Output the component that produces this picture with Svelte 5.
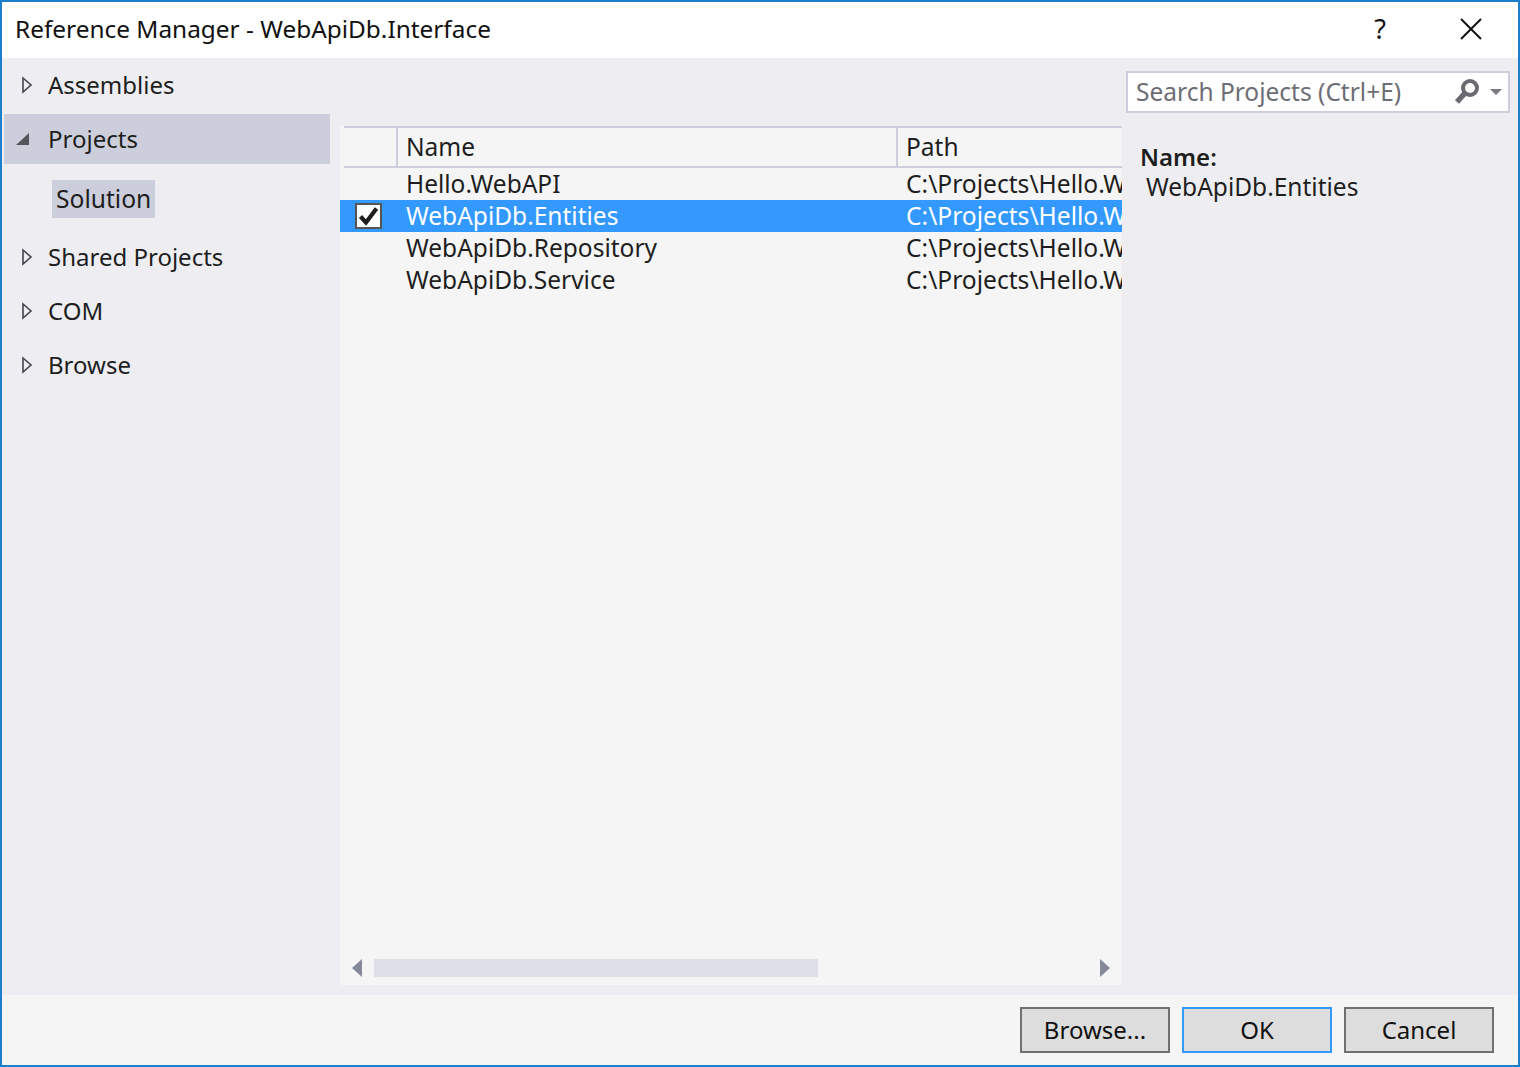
<script>
  const nav = [
    { label: 'Assemblies', icon: 'closed' },
    { label: 'Projects', icon: 'open', selected: true },
    { label: 'Solution', sub: true },
    { label: 'Shared Projects', icon: 'closed' },
    { label: 'COM', icon: 'closed' },
    { label: 'Browse', icon: 'closed' }
  ];
  const rows = [
    { name: 'Hello.WebAPI' },
    { name: 'WebApiDb.Entities', selected: true },
    { name: 'WebApiDb.Repository' },
    { name: 'WebApiDb.Service' }
  ];
</script>

<div class="window">
  <header class="title">
    <span class="title-text">Reference Manager - WebApiDb.Interface</span>
    <span class="help">?</span>
    <svg class="close" width="22" height="22" viewBox="0 0 22 22"><path d="M1 1 L21 21 M21 1 L1 21" stroke="#111" stroke-width="2" fill="none"/></svg>
  </header>

  <div class="main">
    <nav class="nav">
      {#each nav as item}
        {#if item.sub}
          <div class="sub"><span>{item.label}</span></div>
        {:else}
          <div class="nav-row" class:selected={item.selected}>
            {#if item.icon === 'closed'}
              <svg class="arrow closed" width="12" height="18" viewBox="0 0 12 18"><path d="M2 2 L10 9 L2 16 Z" fill="none" stroke="#444450" stroke-width="1.6"/></svg>
            {:else}
              <svg class="arrow" width="16" height="18" viewBox="0 0 16 18"><path d="M1 15 L14 15 L14 3 Z" fill="#55555c"/></svg>
            {/if}
            <span>{item.label}</span>
          </div>
        {/if}
      {/each}
    </nav>

    <section class="list">
      <div class="thead">
        <div class="c-check"></div>
        <div class="c-name">Name</div>
        <div class="c-path">Path</div>
      </div>
      <div class="tbody">
        {#each rows as row}
          <div class="tr" class:selected={row.selected}>
            <div class="c-check">
              {#if row.selected}
                <span class="checkbox">
                  <svg width="23" height="21" viewBox="0 0 23 21"><path d="M3.5 10.5 L9 16.5 L19.5 2.5" fill="none" stroke="#1e1e1e" stroke-width="4.2"/></svg>
                </span>
              {/if}
            </div>
            <div class="c-name">{row.name}</div>
            <div class="c-path">C:\Projects\Hello.WebAPI\WebApiDb</div>
          </div>
        {/each}
      </div>
      <div class="scrollbar">
        <svg width="10" height="18" viewBox="0 0 10 18"><path d="M10 0 V18 L0 9 Z" fill="#868999"/></svg>
        <div class="track"><div class="thumb"></div></div>
        <svg width="10" height="18" viewBox="0 0 10 18"><path d="M0 0 V18 L10 9 Z" fill="#868999"/></svg>
      </div>
    </section>

    <aside class="side">
      <div class="search">
        <span class="placeholder">Search Projects (Ctrl+E)</span>
        <svg class="glass" width="26" height="28" viewBox="0 0 26 28"><circle cx="16" cy="10" r="7" fill="none" stroke="#6a6a70" stroke-width="4"/><path d="M11 15 L3 24" stroke="#6a6a70" stroke-width="5.5" fill="none"/></svg>
        <svg class="caret" width="12" height="6" viewBox="0 0 12 6"><path d="M0 0 H12 L6 6 Z" fill="#7a7a82"/></svg>
      </div>
      <div class="details">
        <div class="d-label">Name:</div>
        <div class="d-value">WebApiDb.Entities</div>
      </div>
    </aside>
  </div>

  <footer class="footer">
    <button>Browse...</button>
    <button class="default">OK</button>
    <button>Cancel</button>
  </footer>
</div>

<style>
  :global(body) { margin: 0; background: #fff; }
  .window {
    box-sizing: border-box;
    width: 1520px;
    height: 1067px;
    border: 2px solid #1c7fcb;
    display: flex;
    flex-direction: column;
    font-family: "Noto Sans", "Open Sans", sans-serif;
    font-size: 24.5px;
    color: #1e1e1e;
    overflow: hidden;
  }
  .title {
    height: 56px;
    flex: none;
    box-sizing: border-box;
    padding: 0 0 4px 13px;
    background: #fff;
    display: flex;
    align-items: center;
    color: #111;
    font-size: 24.4px;
  }
  .title-text { flex: 1; }
  .help { width: 24px; text-align: center; margin-right: 68px; margin-left: -1px; font-size: 27px; }
  .close { margin-right: 36px; margin-top: 2px; }

  .main {
    flex: 1;
    min-height: 0;
    background: #eeeef2;
    display: flex;
  }
  .nav {
    width: 328px;
    flex: none;
    padding: 2px 0 0 2px;
    box-sizing: border-box;
    display: flex;
    flex-direction: column;
    font-size: 24px;
  }
  .nav-row {
    height: 50px;
    box-sizing: border-box;
    padding: 0 0 2px 44px;
    margin-bottom: 4px;
    display: flex;
    align-items: center;
    position: relative;
  }
  .nav-row.selected { background: #cccedb; }
  .arrow { position: absolute; left: 11px; top: 16px; }
  .arrow.closed { left: 17px; }
  .sub {
    display: flex;
    padding-left: 48px;
    margin: 12px 0 14px;
    height: 38px;
    font-size: 24.6px;
  }
  .sub span {
    background: #cccedb;
    padding: 0 4px;
    line-height: 38px;
    height: 38px;
  }
  .list {
    width: 782px;
    margin: 68px 0 10px 10px;
    flex: none;
    background: #f5f5f5;
    display: flex;
    flex-direction: column;
    overflow: hidden;
  }
  .thead {
    display: flex;
    margin-left: 4px;
    height: 38px;
    flex: none;
    border-top: 2px solid #cccedb;
    border-bottom: 2px solid #cccedb;
    align-items: stretch;
  }
  .thead .c-check { width: 52px; border-right: 2px solid #cccedb; flex: none; }
  .thead .c-name { width: 500px; padding-left: 8px; box-sizing: border-box; border-right: 2px solid #cccedb; flex: none; line-height: 38px; }
  .thead .c-path { padding-left: 8px; line-height: 38px; }
  .tbody { flex: 1; min-height: 0; }
  .tr { display: flex; height: 32px; align-items: center; white-space: nowrap; overflow: hidden; }
  .tr.selected { background: #3399ff; color: #fff; }
  .tr .c-check { width: 66px; flex: none; display: flex; padding-left: 15px; box-sizing: border-box; }
  .tr .c-name { width: 500px; flex: none; padding-bottom: 2px; }
  .tr .c-path { padding-bottom: 2px; font-size: 24.6px; }
  .checkbox {
    box-sizing: border-box;
    width: 27px;
    height: 26px;
    background: #fff;
    border: 2px solid #555;
    display: flex;
    align-items: center;
    justify-content: center;
  }
  .scrollbar {
    flex: none;
    height: 18px;
    margin-bottom: 8px;
    display: flex;
    align-items: center;
    padding: 0 12px;
    gap: 12px;
  }
  .track { flex: 1; height: 18px; }
  .thumb { width: 444px; height: 18px; background: #dedfe7; }
  .side {
    flex: 1;
    min-width: 0;
    padding: 13px 8px 0 4px;
  }
  .search {
    box-sizing: border-box;
    height: 42px;
    background: #fff;
    border: 2px solid #cccedb;
    display: flex;
    align-items: center;
    padding-left: 8px;
    color: #6d6d75;
  }
  .placeholder { flex: 1; padding-bottom: 2px; }
  .glass { margin-right: 10px; }
  .caret { margin-right: 6px; }
  .details { margin: 29px 0 0 14px; }
  .d-label { font-weight: 600; line-height: 30px; font-size: 24px; }
  .d-value { padding-left: 6px; line-height: 30px; }
  .footer {
    height: 70px;
    flex: none;
    background: #f5f5f5;
    display: flex;
    justify-content: flex-end;
    align-items: flex-start;
    padding: 12px 24px 0 0;
    gap: 12px;
    box-sizing: border-box;
  }
  button {
    width: 150px;
    height: 46px;
    background: #dddddd;
    border: 2px solid #707070;
    font: inherit;
    font-size: 24px;
    color: #111;
    padding: 0 0 2px;
  }
  button.default { border-color: #3399ff; }
</style>
